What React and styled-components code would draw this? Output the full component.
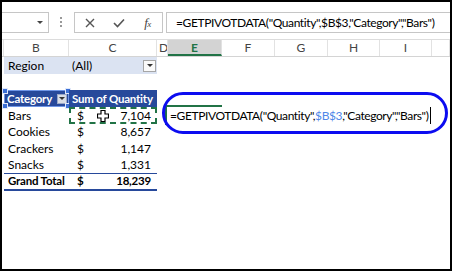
import React from 'react';
import styled, { createGlobalStyle } from 'styled-components';

const Global = createGlobalStyle`
  html, body { margin: 0; padding: 0; background: #fff; }
  body { font-family: Lato, "Liberation Sans", sans-serif; }
`;

const COLS = '2px 65px 88px 11px 54px 53px 53px 52px 52px 1fr';
const PIVOT_BLUE = '#27499b';
const GREEN = '#217346';

const Frame = styled.div`
  position: relative;
  width: 452px;
  height: 271px;
  box-sizing: border-box;
  border: 2px solid #000;
  overflow: hidden;
  background: #fff;
  display: flex;
  flex-direction: column;
`;

const FormulaBar = styled.div`
  height: 38px;
  box-sizing: border-box;
  padding-top: 10px;
  display: flex;
  align-items: flex-start;
  border-bottom: 1px solid #dcdcdc;
  flex-shrink: 0;
`;

const NameBox = styled.div`
  width: 47px;
  height: 21px;
  box-sizing: border-box;
  border: 1px solid #c6c6c6;
  border-left: none;
  background: #fff;
  display: flex;
  align-items: center;
  justify-content: flex-end;
  padding-right: 5px;
`;

const SmallArrow = styled.span`
  width: 0;
  height: 0;
  border-left: 3px solid transparent;
  border-right: 3px solid transparent;
  border-top: 3px solid ${p => p.$color || '#444'};
`;

const Dots = styled.div`
  margin: 5px 0 0 11px;
  width: 2px;
  display: flex;
  flex-direction: column;
  gap: 2px;
  & > i {
    display: block;
    width: 2px;
    height: 2px;
    background: #999;
  }
`;

const ButtonGroup = styled.div`
  margin-left: 12px;
  width: 89px;
  height: 21px;
  box-sizing: border-box;
  border: 1px solid #c6c6c6;
  display: flex;
  align-items: center;
  background: #fff;
`;

const IconSlot = styled.div`
  width: ${p => p.$w}px;
  height: 19px;
  display: flex;
  align-items: center;
  justify-content: center;
  color: #555;
`;

const Fx = styled.span`
  font-family: "Liberation Serif", serif;
  font-style: italic;
  font-size: 13px;
  color: #444;
  letter-spacing: -0.5px;
  & > small {
    font-size: 9px;
  }
`;

const FormulaInput = styled.div`
  margin-left: 3px;
  flex: 1;
  height: 21px;
  box-sizing: border-box;
  border: 1px solid #c6c6c6;
  border-right: none;
  padding-left: 9px;
  font-size: 12px;
  letter-spacing: -0.4px;
  line-height: 19px;
  color: #000;
  white-space: nowrap;
  overflow: hidden;
`;

const HeaderRow = styled.div`
  display: grid;
  grid-template-columns: ${COLS};
  height: 17px;
  box-sizing: border-box;
  border-bottom: 1px solid #d4d4d4;
  flex-shrink: 0;
`;

const ColHead = styled.div`
  box-sizing: border-box;
  border-right: 1px solid #e2e2e2;
  background: ${p => (p.$active ? '#d3d3d3' : '#fff')};
  color: ${p => (p.$active ? GREEN : '#444')};
  font-weight: ${p => (p.$active ? 700 : 400)};
  border-bottom: ${p => (p.$active ? `2px solid ${GREEN}` : 'none')};
  font-size: 12px;
  line-height: 16px;
  text-align: ${p => (p.$left ? 'left' : 'center')};
  padding-left: ${p => (p.$left ? '2px' : '0')};
  overflow: hidden;
`;

const Sheet = styled.div`
  display: flex;
  flex-direction: column;
`;

const Row = styled.div`
  display: grid;
  grid-template-columns: ${COLS};
  height: ${p => p.$h}px;
`;

const Cell = styled.div`
  position: relative;
  grid-column: ${p => p.$col};
  box-sizing: border-box;
  font-size: ${p => (p.$bold ? 11.5 : 12)}px;
  letter-spacing: ${p => (p.$bold ? '-0.2px' : '0')};
  line-height: 16px;
  padding: 0 ${p => p.$pr || 0}px 0 ${p => p.$pl || 4}px;
  color: ${p => p.$color || '#000'};
  background: ${p => p.$bg || 'transparent'};
  font-weight: ${p => (p.$bold ? 700 : 400)};
  white-space: nowrap;
  display: flex;
  align-items: center;
  border-bottom: ${p => p.$bb || 'none'};
`;

const Grow = styled.span`
  flex: 1;
`;

const Dollar = styled.span`
  padding-left: 4px;
`;

const DropButton = styled.span`
  width: ${p => p.$w}px;
  height: ${p => p.$h}px;
  box-sizing: border-box;
  border: 1px solid ${p => p.$border};
  background: ${p => p.$bg};
  display: flex;
  align-items: center;
  justify-content: center;
  margin-right: ${p => p.$mr}px;
`;

const Handle = styled.span`
  position: absolute;
  width: 4px;
  height: 4px;
  background: #3b6fd6;
  border: 1px solid #dfe8fb;
  ${p => p.$pos}
`;

const SelectOutline = styled.span`
  position: absolute;
  inset: 0;
  border: 1px solid #6f95e6;
  pointer-events: none;
`;

const Ants = styled.span`
  position: absolute;
  left: 0;
  top: 0;
  right: 0;
  bottom: 0;
  border: 2px dashed ${GREEN};
  pointer-events: none;
`;

const CursorIcon = styled.svg`
  position: absolute;
  left: 28px;
  top: 3px;
`;

const ActiveCell = styled.div`
  position: relative;
  grid-column: 5;
`;

const ActiveBorder = styled.span`
  position: absolute;
  left: -3px;
  top: -2px;
  width: 57px;
  height: 20px;
  border-top: 2px solid ${GREEN};
  border-left: 2px solid ${GREEN};
  box-sizing: border-box;
`;

const EditText = styled.div`
  position: absolute;
  left: 2px;
  top: 0;
  height: 17px;
  background: #fff;
  font-size: 12px;
  letter-spacing: -0.4px;
  line-height: 17px;
  white-space: nowrap;
  color: #000;
  padding-right: 2px;
  border-right: 1px solid #000;
  z-index: 2;
`;

const Ref = styled.span`
  color: #4f87e8;
`;

const Highlight = styled.div`
  position: absolute;
  left: 160px;
  top: 90px;
  width: 286px;
  height: 42px;
  box-sizing: border-box;
  border: 3px solid #0c0cf0;
  border-radius: 21px;
  z-index: 3;
  pointer-events: none;
`;

const FORMULA = '=GETPIVOTDATA("Quantity",$B$3,"Category","Bars")';

const data = [
  { label: 'Bars', value: '7,104', h: 17, active: true },
  { label: 'Cookies', value: '8,657', h: 16 },
  { label: 'Crackers', value: '1,147', h: 17 },
  { label: 'Snacks', value: '1,331', h: 16, last: true },
];

const cols = ['', 'B', 'C', 'D', 'E', 'F', 'G', 'H', 'I', ''];

export default function App() {
  return (
    <>
      <Global />
      <Frame>
        <FormulaBar>
          <NameBox>
            <SmallArrow />
          </NameBox>
          <Dots>
            <i />
            <i />
            <i />
          </Dots>
          <ButtonGroup>
            <IconSlot $w={30}>
              <svg width="10" height="10" viewBox="0 0 10 10">
                <path d="M1 1 L9 9 M9 1 L1 9" stroke="#555" strokeWidth="1.4" fill="none" />
              </svg>
            </IconSlot>
            <IconSlot $w={28}>
              <svg width="12" height="10" viewBox="0 0 12 10">
                <path d="M1 5 L4.5 8.5 L11 1.5" stroke="#555" strokeWidth="1.6" fill="none" />
              </svg>
            </IconSlot>
            <IconSlot $w={29}>
              <Fx>
                f<small>x</small>
              </Fx>
            </IconSlot>
          </ButtonGroup>
          <FormulaInput>{FORMULA}</FormulaInput>
        </FormulaBar>

        <HeaderRow>
          {cols.map((c, i) => (
            <ColHead key={i} $active={c === 'E'} $left={c === 'D'}>
              {c}
            </ColHead>
          ))}
        </HeaderRow>

        <Sheet>
          <Row $h={17}>
            <Cell $col={2} $bg="#dbe3f2">Region</Cell>
            <Cell $col={3} $bg="#dbe3f2" $pl={3}>
              <Grow>(All)</Grow>
              <DropButton $w={13} $h={12} $border="#a6a6a6" $bg="#fafafa" $mr={1}>
                <SmallArrow $color="#333" />
              </DropButton>
            </Cell>
          </Row>
          <Row $h={16} />
          <Row $h={17}>
            <Cell $col={2} $bg={PIVOT_BLUE} $color="#fff" $bold $pl={3}>
              <SelectOutline />
              <Grow>Category</Grow>
              <DropButton $w={10} $h={10} $border="#9aa8c8" $bg="#d9dde6" $mr={2}>
                <SmallArrow $color="#333" />
              </DropButton>
              <Handle $pos="left:-2px;top:-2px;" />
              <Handle $pos="right:-2px;top:-2px;" />
              <Handle $pos="left:-2px;bottom:-2px;" />
              <Handle $pos="right:-2px;bottom:-2px;" />
            </Cell>
            <Cell $col={3} $bg={PIVOT_BLUE} $color="#fff" $bold $pl={3}>
              Sum of Quantity
            </Cell>
          </Row>
          {data.map(d => (
            <Row key={d.label} $h={d.h}>
              <Cell $col={2} $bb={d.last ? `1px solid ${PIVOT_BLUE}` : 'none'}>
                {d.label}
              </Cell>
              <Cell $col={3} $pl={4} $pr={6} $bb={d.last ? `1px solid ${PIVOT_BLUE}` : 'none'}>
                <Dollar>$</Dollar>
                <Grow />
                <span>{d.value}</span>
                {d.active && (
                  <>
                    <Ants />
                    <CursorIcon width="12" height="12" viewBox="0 0 12 12">
                      <path
                        d="M4 0.5 H8 V4 H11.5 V8 H8 V11.5 H4 V8 H0.5 V4 H4 Z"
                        fill="#fff"
                        stroke="#000"
                        strokeWidth="1.2"
                      />
                    </CursorIcon>
                  </>
                )}
              </Cell>
              {d.active && (
                <ActiveCell>
                  <ActiveBorder />
                  <EditText>
                    =GETPIVOTDATA("Quantity",<Ref>$B$3</Ref>,"Category","Bars")
                  </EditText>
                </ActiveCell>
              )}
            </Row>
          ))}
          <Row $h={16}>
            <Cell $col={2} $bold $bb={`2px solid ${PIVOT_BLUE}`}>
              Grand Total
            </Cell>
            <Cell $col={3} $bold $pl={4} $pr={6} $bb={`2px solid ${PIVOT_BLUE}`}>
              <Dollar>$</Dollar>
              <Grow />
              <span>18,239</span>
            </Cell>
          </Row>
        </Sheet>

        <Highlight />
      </Frame>
    </>
  );
}
